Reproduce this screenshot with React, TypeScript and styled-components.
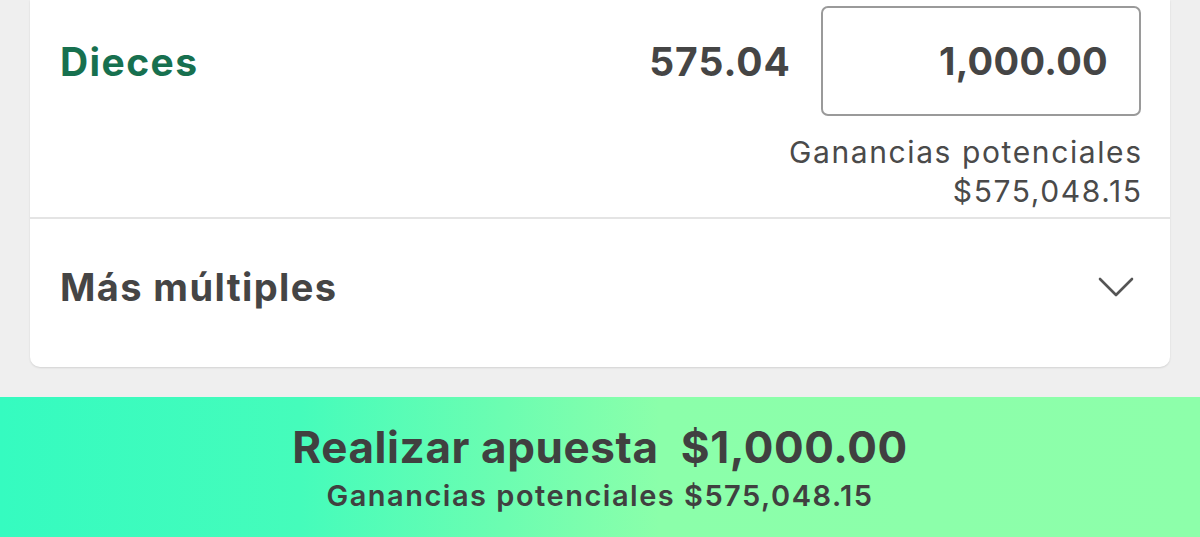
import React from "react";
import styled, { createGlobalStyle } from "styled-components";

const GlobalStyle = createGlobalStyle`
  html, body {
    margin: 0;
    padding: 0;
    background: #efefef;
    font-family: Inter, "Noto Sans", sans-serif;
    -webkit-font-smoothing: antialiased;
  }
`;

const Page = styled.div`
  width: 1200px;
  height: 537px;
  display: flex;
  flex-direction: column;
  background: #efefef;
  overflow: hidden;
`;

const CardArea = styled.div`
  flex: 1;
  padding: 0 30px;
`;

const Card = styled.div`
  background: #ffffff;
  border-radius: 0 0 10px 10px;
  box-shadow: 0 1px 2px rgba(0, 0, 0, 0.12);
`;

const BetRow = styled.div`
  display: grid;
  grid-template-columns: 1fr auto 320px;
  grid-template-rows: 110px auto;
  column-gap: 30px;
  padding: 6px 29px 6px 30px;
  border-bottom: 2px solid #e4e4e4;
`;

const Selection = styled.div`
  align-self: center;
  font-size: 39px;
  font-weight: 700;
  color: #17704f;
  letter-spacing: 1.4px;
`;

const Odds = styled.div`
  align-self: center;
  font-size: 39px;
  font-weight: 700;
  color: #454545;
  letter-spacing: 1px;
`;

const StakeBox = styled.div`
  box-sizing: border-box;
  border: 2px solid #9a9a9a;
  border-radius: 7px;
  display: flex;
  align-items: center;
  justify-content: flex-end;
  padding-right: 31px;
  font-size: 38px;
  font-weight: 700;
  color: #454545;
  letter-spacing: 0.3px;
`;

const Potential = styled.div`
  grid-column: 1 / -1;
  text-align: right;
  padding-top: 17px;
  font-size: 30px;
  line-height: 39px;
  font-weight: 400;
  color: #4a4a4a;
  letter-spacing: 1.6px;
  margin-right: -1.6px;
`;

const ExpandRow = styled.div`
  height: 148px;
  box-sizing: border-box;
  padding: 0 36px 12px 30px;
  display: flex;
  align-items: center;
  justify-content: space-between;
`;

const ExpandTitle = styled.div`
  font-size: 38px;
  font-weight: 700;
  color: #454545;
  letter-spacing: 1.4px;
`;

const Chevron = styled.svg`
  width: 36px;
  height: 22px;
`;

const PlaceBar = styled.div`
  height: 140px;
  flex-shrink: 0;
  display: flex;
  flex-direction: column;
  align-items: center;
  justify-content: center;
  gap: 10px;
  background: linear-gradient(
    90deg,
    #35fbc0 0%,
    #45fcbb 25%,
    #6cfdb1 42%,
    #8bffaa 55%,
    #8dffaa 100%
  );
  color: #404040;
`;

const PlaceTitle = styled.div`
  font-size: 44px;
  font-weight: 700;
  line-height: 48px;
  white-space: pre;
  letter-spacing: 0.6px;
`;

const PlaceSub = styled.div`
  font-size: 29px;
  font-weight: 600;
  line-height: 30px;
  letter-spacing: 1.5px;
`;

export default function App() {
  return (
    <Page>
      <GlobalStyle />
      <CardArea>
        <Card>
          <BetRow>
            <Selection>Dieces</Selection>
            <Odds>575.04</Odds>
            <StakeBox>1,000.00</StakeBox>
            <Potential>
              Ganancias potenciales
              <br />
              $575,048.15
            </Potential>
          </BetRow>
          <ExpandRow>
            <ExpandTitle>Más múltiples</ExpandTitle>
            <Chevron viewBox="0 0 36 22" fill="none">
              <path
                d="M2 3 L18 19 L34 3"
                stroke="#555555"
                strokeWidth="2.6"
                strokeLinecap="round"
                strokeLinejoin="round"
              />
            </Chevron>
          </ExpandRow>
        </Card>
      </CardArea>
      <PlaceBar>
        <PlaceTitle>Realizar apuesta  $1,000.00</PlaceTitle>
        <PlaceSub>Ganancias potenciales $575,048.15</PlaceSub>
      </PlaceBar>
    </Page>
  );
}
